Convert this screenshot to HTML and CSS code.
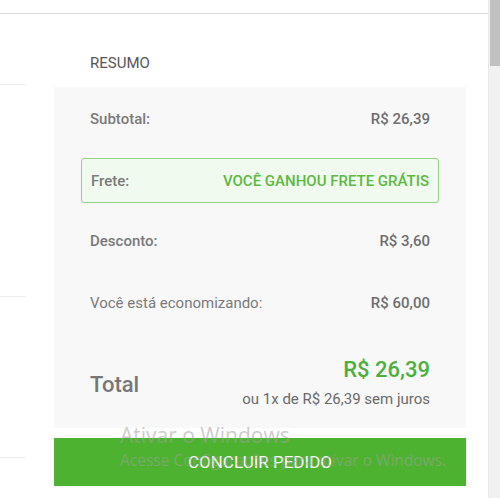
FILE: index.html
```html
<!DOCTYPE html>
<html lang="pt-BR">
<head>
<meta charset="utf-8">
<link rel="stylesheet" href="styles.css">
</head>
<body>
<div class="page">
  <div class="content">
    <div class="topbar"></div>
    <div class="main">
      <div class="left">
        <div class="lcard c1"></div>
        <div class="lcard c2"></div>
        <div class="lcard c3"></div>
      </div>
      <div class="summary">
        <h2 class="title">RESUMO</h2>
        <div class="panel">
          <div class="row r-sub"><span class="lbl">Subtotal:</span><span class="val">R$ 26,39</span></div>
          <div class="row frete"><span class="lbl">Frete:</span><span class="val green">VOCÊ GANHOU FRETE GRÁTIS</span></div>
          <div class="row r-desc"><span class="lbl">Desconto:</span><span class="val">R$ 3,60</span></div>
          <div class="row r-eco"><span class="lbl light">Você está economizando:</span><span class="val">R$ 60,00</span></div>
          <div class="total">
            <span class="tlbl">Total</span>
            <div class="tvals">
              <span class="tprice">R$ 26,39</span>
              <span class="tinst">ou 1x de R$ 26,39 sem juros</span>
            </div>
          </div>
        </div>
        <button class="btn">CONCLUIR PEDIDO</button>
        <div class="watermark">
          <div class="wm1">Ativar o Windows</div>
          <div class="wm2">Acesse Configurações para ativar o Windows.</div>
        </div>
      </div>
    </div>
  </div>
  <div class="scrollbar"><div class="thumb"></div></div>
</div>
</body>
</html>
```
FILE: styles.css
```css
* { box-sizing: border-box; }
html, body { margin: 0; padding: 0; background: #fff; }
body { font-family: Roboto, "Noto Sans", Arial, sans-serif; width: 500px; height: 498px; overflow: hidden; }

.page { display: flex; height: 498px; }
.content { flex: 1; }
.scrollbar { width: 12px; background: #f1f1f1; border-left: 1px solid #e8e8e8; }
.thumb { height: 66px; background: #c1c1c1; margin-left: 1px; }

.topbar { height: 14px; border-bottom: 1px solid #dcdcdc; }

.main { display: flex; }
.left { width: 26px; margin-right: 28px; }
.lcard { border-bottom: 1px solid #ececec; }
.c1 { height: 71px; }
.c2 { height: 212px; }
.c3 { height: 161px; }

.summary { width: 412px; position: relative; }
.title { margin: 0; padding: 41px 0 0 36px; height: 73px; font-size: 15px; font-weight: 400; color: #555; line-height: 17px; }

.panel { background: #f8f8f8; padding: 22px 36px 20px 36px; }

.row { display: flex; justify-content: space-between; align-items: center; line-height: 20px; font-size: 15px; }
.lbl { color: #7a7a7a; font-weight: 500; }
.lbl.light { font-weight: 400; }
.val { color: #6e6e6e; font-weight: 500; }
.green { color: #5cb944; }

.frete { margin: 29px -9px 0 -9px; padding: 1px 9px 0 9px; height: 45px; border: 1px solid #93cf84; border-radius: 3px; background: #f1faee; }
.r-desc { margin-top: 28px; }
.r-eco { margin-top: 42px; }

.total { display: flex; justify-content: space-between; align-items: center; margin-top: 45px; }
.tlbl { font-size: 22px; font-weight: 500; color: #777; padding-top: 2px; }
.tvals { display: flex; flex-direction: column; align-items: flex-end; }
.tprice { font-size: 22px; font-weight: 500; color: #4caf3c; line-height: 24px; }
.tinst { font-size: 15px; color: #6a6a6a; line-height: 18px; margin-top: 8px; }

.btn { display: block; width: 100%; height: 48px; margin-top: 10px; border: 0; background: #4db22f; color: #fff; font-family: Roboto, Arial, sans-serif; font-size: 17px; font-weight: 400; }

.watermark { position: absolute; left: 66px; top: 408px; pointer-events: none; font-family: "Open Sans", "Noto Sans", sans-serif; color: rgba(160,160,160,0.55); }
.wm1 { font-size: 21px; line-height: 26px; }
.wm2 { font-size: 15.5px; line-height: 20px; margin-top: 2px; }
```
